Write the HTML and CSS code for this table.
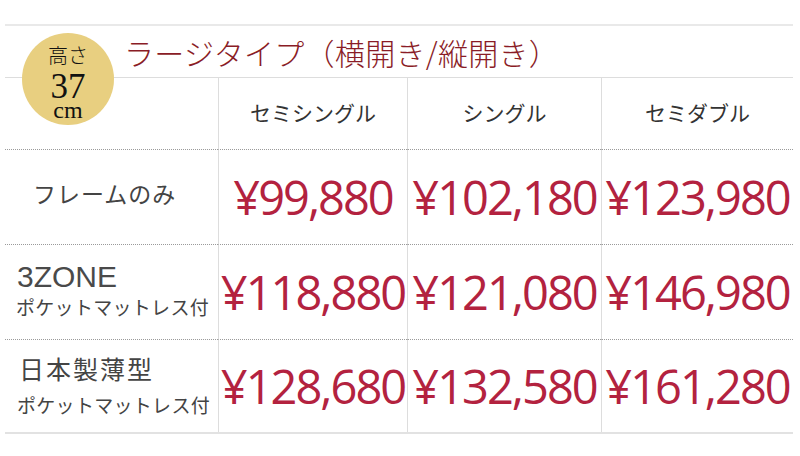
FILE: index.html
```html
<!DOCTYPE html>
<html lang="ja">
<head>
<meta charset="utf-8">
<title>ラージタイプ 価格表</title>
<link rel="stylesheet" href="styles.css">
</head>
<body>
<div class="table">
  <div class="badge">
    <span class="b1">高さ</span>
    <span class="b2">37</span>
    <span class="b3">cm</span>
  </div>
  <div class="title">ラージタイプ（横開き/縦開き）</div>

  <div class="cell corner"></div>
  <div class="cell head">セミシングル</div>
  <div class="cell head">シングル</div>
  <div class="cell head">セミダブル</div>

  <div class="cell label label-frame">フレームのみ</div>
  <div class="cell price">¥99,880</div>
  <div class="cell price">¥102,180</div>
  <div class="cell price">¥123,980</div>

  <div class="cell label label-zone">
    <span class="zone">3ZONE</span>
    <span class="pocket">ポケットマットレス付</span>
  </div>
  <div class="cell price">¥118,880</div>
  <div class="cell price">¥121,080</div>
  <div class="cell price">¥146,980</div>

  <div class="cell label label-thin last">
    <span class="thin">日本製薄型</span>
    <span class="pocket">ポケットマットレス付</span>
  </div>
  <div class="cell price last">¥128,680</div>
  <div class="cell price last">¥132,580</div>
  <div class="cell price last">¥161,280</div>
</div>
</body>
</html>
```

FILE: styles.css
```css
* { box-sizing: border-box; }

html, body {
  margin: 0;
  padding: 0;
  background: #ffffff;
}

body {
  font-family: "Noto Sans CJK JP", "Noto Sans", sans-serif;
  color: #444;
}

.table {
  position: relative;
  width: 788px;
  margin: 24px 0 0 5px;
  display: grid;
  grid-template-columns: 213px 189px 194px 192px;
  grid-template-rows: 52px 72px 95px 95px 92px;
  border-top: 2px solid #e9e9e9;
  border-bottom: 2px solid #e2e2e2;
}

.title {
  grid-column: 1 / -1;
  display: flex;
  align-items: center;
  padding-left: 119px;
  border-bottom: 1px solid #dddddd;
  font-size: 30px;
  font-weight: 300;
  letter-spacing: 0.3px;
  color: #8a1c26;
  white-space: nowrap;
}

.badge {
  position: absolute;
  left: 17px;
  top: 7px;
  width: 92px;
  height: 92px;
  border-radius: 50%;
  background: #e8cf80;
  display: flex;
  flex-direction: column;
  align-items: center;
  padding-top: 11px;
  color: #111;
  z-index: 2;
}

.b1 {
  font-size: 20px;
  line-height: 22px;
  font-weight: 300;
}

.b2 {
  font-family: "Liberation Serif", "DejaVu Serif", serif;
  font-size: 35px;
  line-height: 25px;
  margin-top: 8px;
}

.b3 {
  font-family: "Liberation Serif", "DejaVu Serif", serif;
  font-size: 24px;
  line-height: 20px;
  margin-top: 1px;
}

.cell {
  display: flex;
  align-items: center;
  border-bottom: 1px dotted #9a9a9a;
  white-space: nowrap;
}

.cell.last {
  border-bottom: none;
}

.head,
.price {
  justify-content: center;
  border-left: 1px solid #dddddd;
}

.head {
  font-size: 21px;
  color: #333;
  padding-bottom: 4px;
}

.price {
  font-family: "Open Sans", "Noto Sans", sans-serif;
  font-size: 47px;
  line-height: 1;
  letter-spacing: -2px;
  color: #b3223f;
}

.label {
  flex-direction: column;
  align-items: flex-start;
  justify-content: center;
  color: #444;
}

.label-frame {
  padding-left: 28px;
  padding-bottom: 8px;
  font-size: 23px;
  letter-spacing: 1px;
}

.label-zone {
  padding-left: 11px;
}

.zone {
  font-family: "Liberation Sans", "Noto Sans", sans-serif;
  font-size: 30px;
  line-height: 30px;
  padding-left: 1px;
  color: #4a4a4a;
}

.pocket {
  font-size: 19px;
  line-height: 30px;
  letter-spacing: 0.3px;
}

.label-thin {
  padding-left: 12px;
}

.thin {
  font-size: 25px;
  line-height: 38px;
  letter-spacing: 2px;
  padding-left: 2px;
}

.label-thin .pocket {
  line-height: 36px;
}
```
